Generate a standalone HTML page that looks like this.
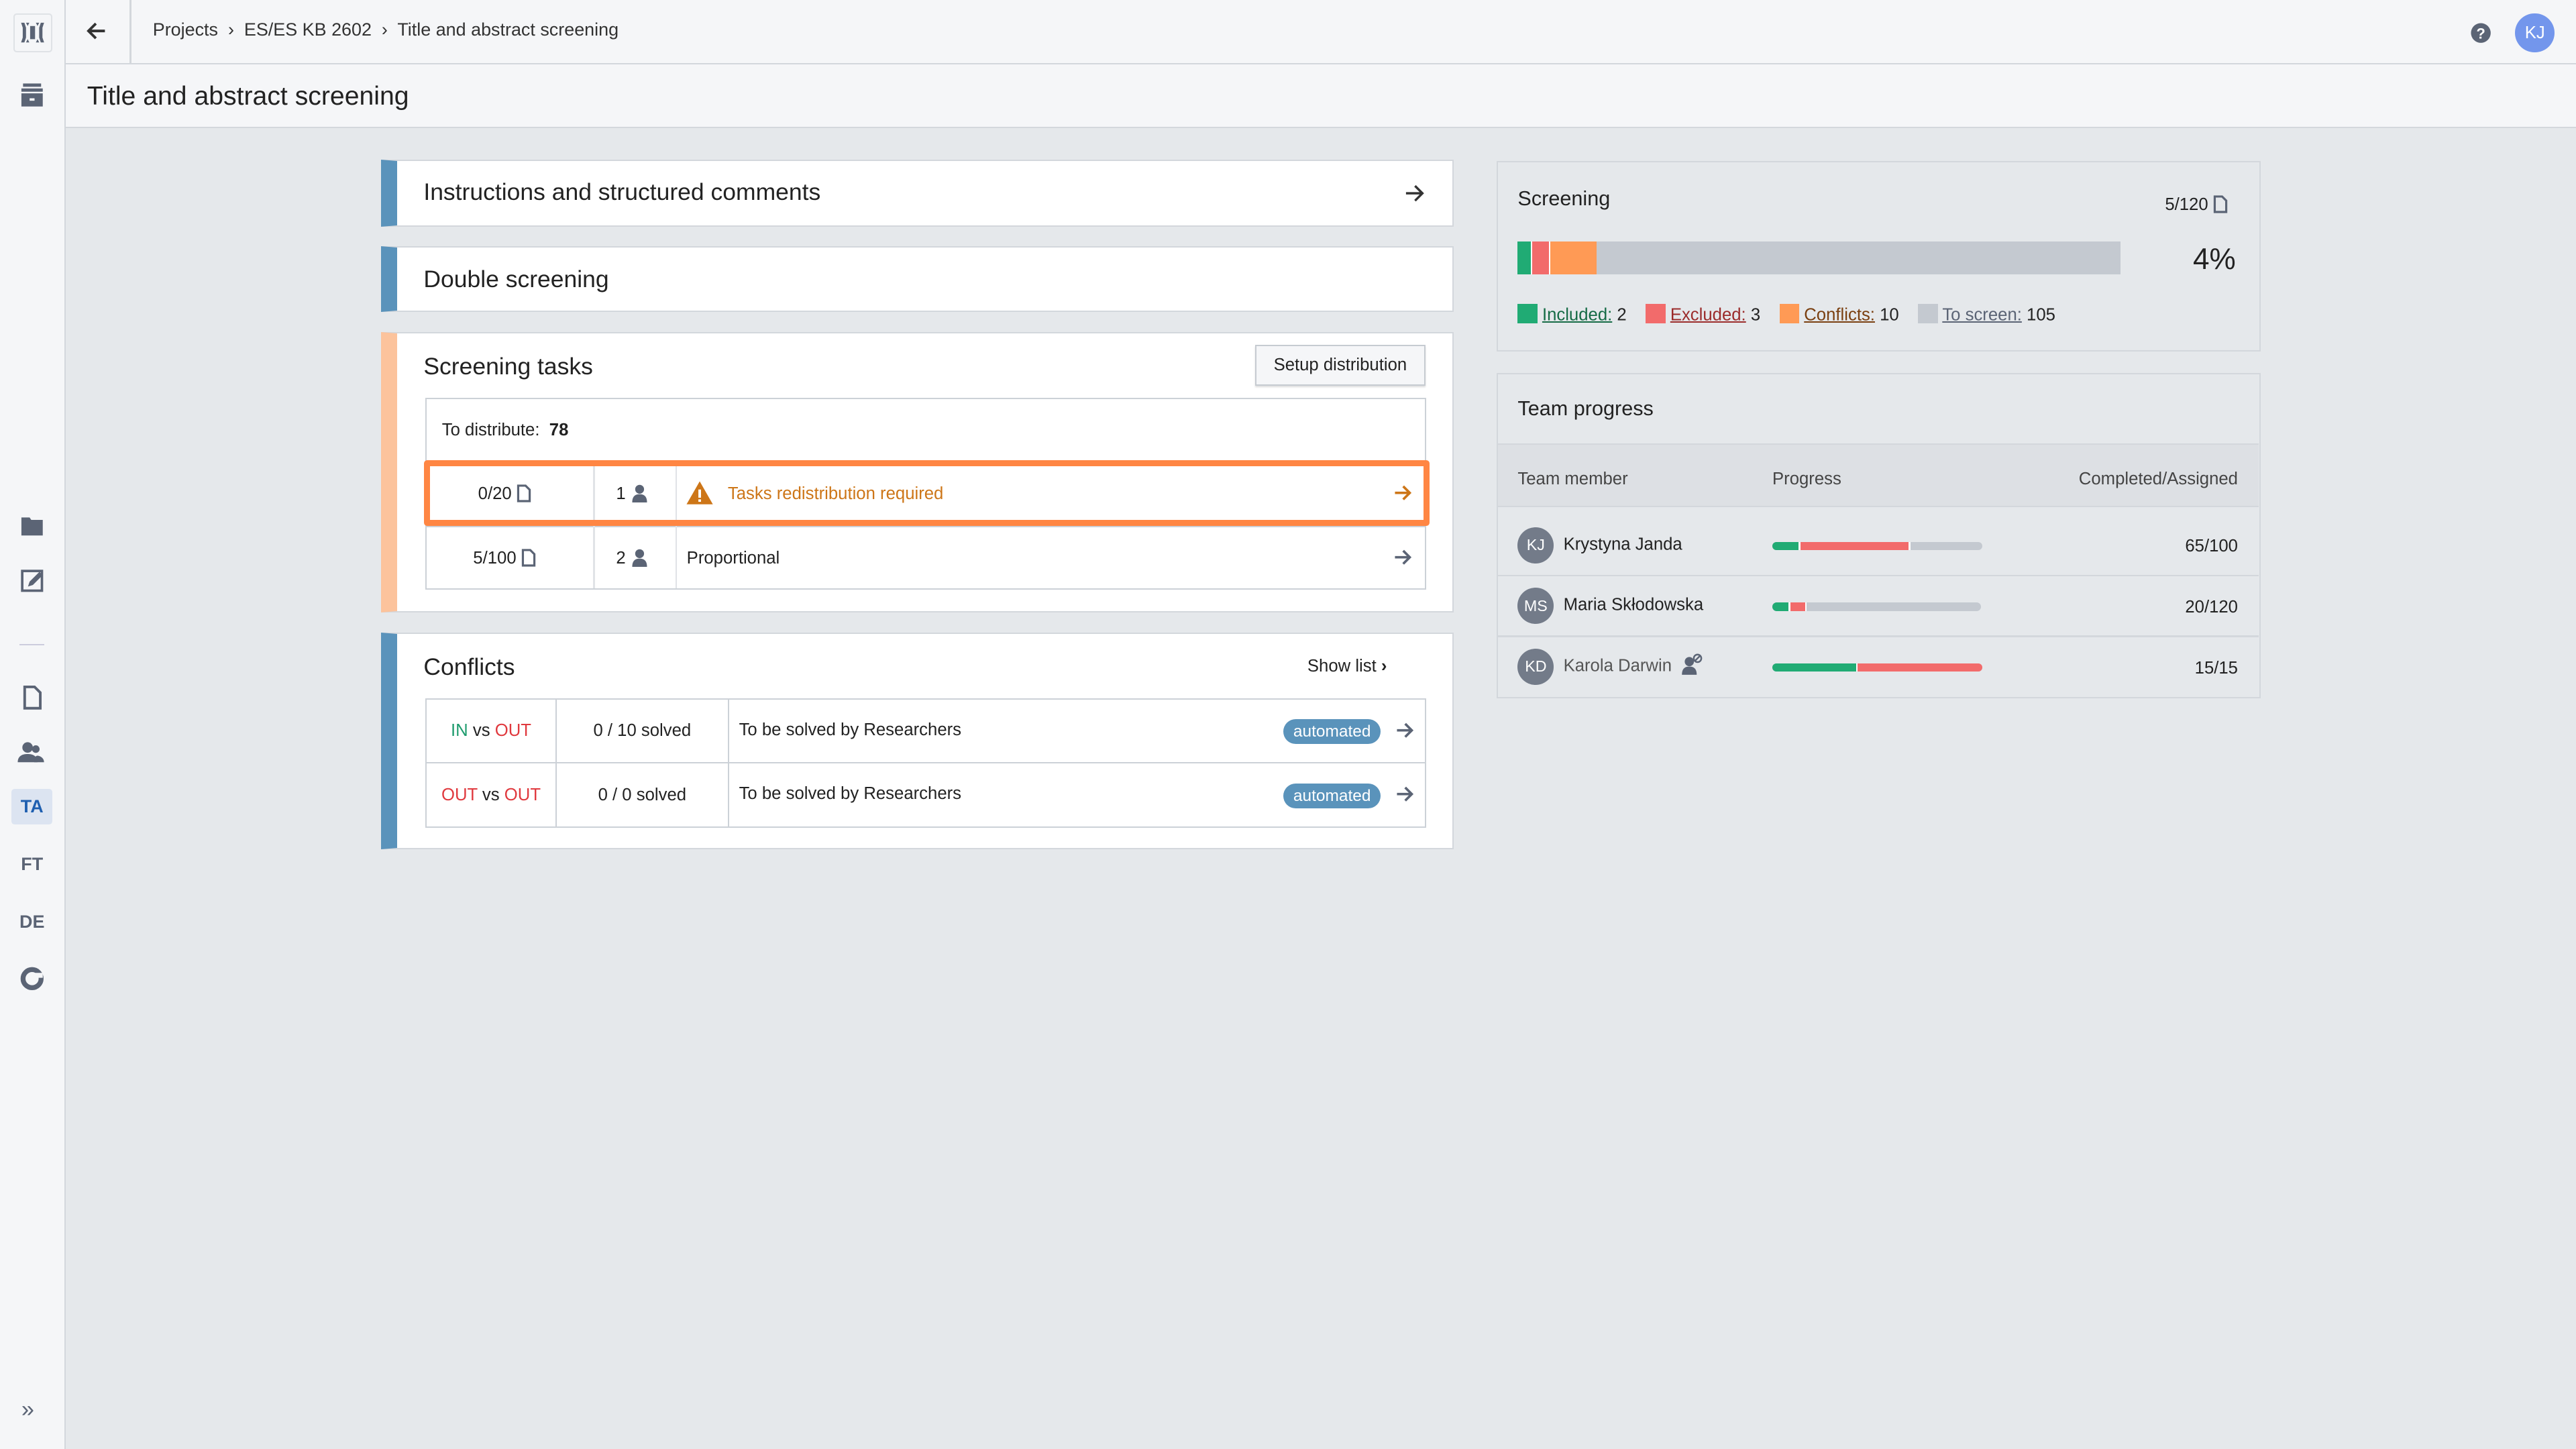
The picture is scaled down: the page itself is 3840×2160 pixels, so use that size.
<!DOCTYPE html>
<html><head><meta charset="utf-8"><style>
*{box-sizing:border-box;margin:0;padding:0}
html,body{width:3840px;height:2160px;overflow:hidden;background:#e5e8eb}
#z{zoom:2.449;width:1568px;height:882px;position:relative;font-family:"Liberation Sans",sans-serif;color:#222;font-size:11px}
.abs{position:absolute}
.top{left:0;top:0;width:1568px;height:39px;background:#f5f6f8;border-bottom:1px solid #d3d7dc}
.tb{left:0;top:39px;width:1568px;height:39px;background:#f5f6f8;border-bottom:1px solid #d3d7dc}
.side{left:0;top:0;width:40px;height:882px;background:#f5f6f8;border-right:1px solid #d3d7dc}
.card{position:absolute;background:#fff;border:1px solid #d3d7dc;border-left:10px solid #5a93bb}
.h{font-size:14.5px;color:#222;position:absolute}
table{border-collapse:collapse;position:absolute;font-size:10.5px}
td{border:1px solid #ccd1d7;height:39px;vertical-align:middle}
.ic{fill:#5b6475}
.badge{background:#5a93bb;color:#fff;border-radius:8px;padding:2px 6px;font-size:10px}
.rc{position:absolute;background:#e5e8eb;border:1px solid #d3d7dc}
.av{width:22px;height:22px;border-radius:50%;background:#737b89;color:#fff;font-size:9.5px;display:inline-flex;align-items:center;justify-content:center;vertical-align:middle}
.bar{position:absolute;height:5px;border-radius:3px;overflow:hidden;background:#c4c9d0;display:flex}
svg.i{vertical-align:-2px}
</style></head><body><div id="z">
<div class="abs top"></div>
<div class="abs tb"></div>
<div class="abs side"></div>
<div class="abs" style="left:8px;top:8px;width:24px;height:24px;border:1px solid #dfe2e6;border-radius:2px;background:#f5f6f8"></div>
<svg class="abs" style="left:12px;top:12px" width="16" height="16"><path d="M1 2h2l1 3v6l-1 3H1l1-3V5z" fill="#5b6475"/><path d="M15 2h-2l-1 3v6l1 3h2l-1-3V5z" fill="#5b6475"/><rect x="6.5" y="4" width="3" height="8" fill="#5b6475"/><path d="M4 2h2l-1 2zM12 2h-2l1 2zM4 14h2l-1-2zM12 14h-2l1-2z" fill="#5b6475"/></svg>
<div class="abs" style="left:79px;top:0;width:1px;height:39px;background:#d3d7dc"></div>
<svg class="abs" style="left:52px;top:12px" width="14" height="14" viewBox="0 0 14 14"><path d="M12 7H2M6.5 2.5L2 7l4.5 4.5" stroke="#333" stroke-width="1.6" fill="none"/></svg>
<div class="abs" style="left:93px;top:12px;font-size:11px;color:#333;white-space:nowrap">Projects &nbsp;›&nbsp; ES/ES KB 2602 &nbsp;›&nbsp; Title and abstract screening</div>
<div class="abs" style="left:53px;top:50px;font-size:16px;color:#222">Title and abstract screening</div>
<svg class="abs" style="left:1503px;top:13px" width="14" height="14"><circle cx="7" cy="7" r="6" fill="#5b6475"/><text x="7" y="10.5" font-size="9" font-weight="bold" fill="#fff" text-anchor="middle" font-family="Liberation Sans">?</text></svg>
<div class="abs" style="left:1531px;top:8px;width:24px;height:24px;border-radius:50%;background:#7396ec;color:#fff;font-size:10.5px;text-align:center;line-height:24px">KJ</div>
<!-- sidebar icons -->
<svg class="abs" style="left:11px;top:50px" width="17" height="17"><rect x="3" y="1" width="11" height="2" class="ic"/><rect x="2" y="4" width="13" height="2" class="ic"/><rect x="2" y="7" width="13" height="8" class="ic"/><rect x="7" y="10" width="3" height="1.5" fill="#f5f6f8"/></svg>
<svg class="abs" style="left:11px;top:312px" width="17" height="17"><path d="M2 3h5l1 1.5h7V14H2z" class="ic"/></svg>
<svg class="abs" style="left:11px;top:345px" width="17" height="17"><rect x="2.5" y="2.5" width="12" height="12" fill="none" stroke="#5b6475" stroke-width="1.5"/><path d="M6 12l1-3 6-6 2 2-6 6z" class="ic"/></svg>
<div class="abs" style="left:12px;top:392px;width:15px;height:1px;background:#ccd"></div>
<svg class="abs" style="left:11px;top:416px" width="17" height="17"><path d="M4 2h6l3.5 3.5V15H4z" fill="none" stroke="#5b6475" stroke-width="1.6"/></svg>
<svg class="abs" style="left:10px;top:450px" width="18" height="17"><circle cx="7" cy="5" r="3.2" class="ic"/><path d="M1 14c0-4 3-5 6-5s6 1 6 5z" class="ic"/><circle cx="12" cy="6" r="2.3" class="ic"/><path d="M11 14c0-3 1-4 2-4s4 1 4 4z" class="ic"/></svg>
<div class="abs" style="left:7px;top:480px;width:25px;height:22px;background:#dce4f1;border-radius:2px;color:#1f5fb0;font-weight:bold;font-size:11px;text-align:center;line-height:22px">TA</div>
<div class="abs" style="left:7px;top:520px;width:25px;text-align:center;color:#5b6475;font-weight:bold;font-size:11px">FT</div>
<div class="abs" style="left:7px;top:555px;width:25px;text-align:center;color:#5b6475;font-weight:bold;font-size:11px">DE</div>
<svg class="abs" style="left:11px;top:587px" width="17" height="17"><circle cx="8.5" cy="8.5" r="5.5" fill="none" stroke="#5b6475" stroke-width="3"/><rect x="9" y="5" width="6" height="3" fill="#f5f6f8"/></svg>
<div class="abs" style="left:13px;top:850px;font-size:14px;color:#5b6475">»</div>

<!-- Left column -->
<div class="card" style="left:232px;top:97px;width:653px;height:41px"><div class="h" style="left:16px;top:11px">Instructions and structured comments</div>
<svg class="abs" style="left:612px;top:13px" width="14" height="14"><path d="M2 7h10M7.5 2.5L12 7l-4.5 4.5" stroke="#333" stroke-width="1.4" fill="none"/></svg></div>
<div class="card" style="left:232px;top:150px;width:653px;height:40px"><div class="h" style="left:16px;top:11px">Double screening</div></div>
<div class="card" style="left:232px;top:202px;width:653px;height:171px;border-left-color:#fcc39c"><div class="h" style="left:16px;top:12px">Screening tasks</div>
<div class="abs" style="left:522px;top:7px;width:104px;height:25px;background:#f5f6f8;border:1px solid #c6cbd1;font-size:10.5px;text-align:center;line-height:23px;box-shadow:0 1px 1px #ddd">Setup distribution</div></div>
<div class="abs" style="left:259px;top:242px;width:609px;height:117px;border:1px solid #ccd1d7;background:#fff"></div>
<div class="abs" style="left:269px;top:256px;font-size:10.5px">To distribute: &nbsp;<b>78</b></div>
<div class="abs" style="left:259px;top:320px;width:609px;height:1px;background:#ccd1d7"></div>
<div class="abs" style="left:361px;top:281px;width:1px;height:77px;background:#e0e3e7"></div>
<div class="abs" style="left:411px;top:281px;width:1px;height:77px;background:#e0e3e7"></div>
<div class="abs" style="left:258px;top:280px;width:612px;height:40px;border:4px solid #ff8643;border-radius:2px"></div>
<div class="abs" style="left:291px;top:295px;font-size:10.5px">0/20 <svg class="i" width="9" height="11"><path d="M1 .8h4.5L8 3.3v6.9H1z" fill="none" stroke="#5b6475" stroke-width="1.3"/></svg></div>
<div class="abs" style="left:375px;top:295px;font-size:10.5px">1 <svg class="i" width="11" height="11"><circle cx="5.5" cy="3" r="2.7" fill="#5b6475"/><path d="M1 11c0-4 2-5 4.5-5S10 7 10 11z" fill="#5b6475"/></svg></div>
<svg class="abs" style="left:417px;top:292px" width="18" height="16"><path d="M9 1L17 15H1z" fill="#cd7618"/><rect x="8.2" y="6" width="1.6" height="5" fill="#fff"/><rect x="8.2" y="12" width="1.6" height="1.5" fill="#fff"/></svg>
<div class="abs" style="left:443px;top:295px;font-size:10.5px;color:#cd7618">Tasks redistribution required</div>
<svg class="abs" style="left:848px;top:294px" width="12" height="12"><path d="M1 6h9M6 2l4 4-4 4" stroke="#cd7618" stroke-width="1.5" fill="none"/></svg>
<div class="abs" style="left:288px;top:334px;font-size:10.5px">5/100 <svg class="i" width="9" height="11"><path d="M1 .8h4.5L8 3.3v6.9H1z" fill="none" stroke="#5b6475" stroke-width="1.3"/></svg></div>
<div class="abs" style="left:375px;top:334px;font-size:10.5px">2 <svg class="i" width="11" height="11"><circle cx="5.5" cy="3" r="2.7" fill="#5b6475"/><path d="M1 11c0-4 2-5 4.5-5S10 7 10 11z" fill="#5b6475"/></svg></div>
<div class="abs" style="left:418px;top:334px;font-size:10.5px">Proportional</div>
<svg class="abs" style="left:848px;top:333px" width="12" height="12"><path d="M1 6h9M6 2l4 4-4 4" stroke="#5b6475" stroke-width="1.5" fill="none"/></svg>

<div class="card" style="left:232px;top:385px;width:653px;height:132px"><div class="h" style="left:16px;top:12px">Conflicts</div>
<div class="abs" style="left:554px;top:14px;font-size:10.5px">Show list <b>›</b></div></div>
<table style="left:259px;top:425px;width:609px;background:#fff">
<tr><td style="width:79px;text-align:center"><span style="color:#1f9c6e">IN</span> vs <span style="color:#e0393e">OUT</span></td><td style="width:105px;text-align:center">0 / 10 solved</td><td style="padding-left:6px">To be solved by Researchers<span style="float:right;margin-right:6px"><span class="badge">automated</span>&nbsp;&nbsp;&nbsp;<svg class="i" width="12" height="12"><path d="M1 6h9M6 2l4 4-4 4" stroke="#5b6475" stroke-width="1.5" fill="none"/></svg></span></td></tr>
<tr><td style="text-align:center"><span style="color:#e0393e">OUT</span> vs <span style="color:#e0393e">OUT</span></td><td style="text-align:center">0 / 0 solved</td><td style="padding-left:6px">To be solved by Researchers<span style="float:right;margin-right:6px"><span class="badge">automated</span>&nbsp;&nbsp;&nbsp;<svg class="i" width="12" height="12"><path d="M1 6h9M6 2l4 4-4 4" stroke="#5b6475" stroke-width="1.5" fill="none"/></svg></span></td></tr>
</table>

<!-- Right column -->
<div class="rc" style="left:911px;top:98px;width:465px;height:116px">
<div class="abs" style="left:12px;top:15px;font-size:12.5px">Screening</div>
<div class="abs" style="left:406px;top:20px;font-size:10.5px">5/120 <svg class="i" width="9" height="11"><path d="M1 .8h4.5L8 3.3v6.9H1z" fill="none" stroke="#5b6475" stroke-width="1.3"/></svg></div>
<div class="abs" style="left:12px;top:48px;width:367px;height:20px;background:#c4c9d0;display:flex"><div style="width:8px;background:#20ab74"></div><div style="width:1px;background:#fff"></div><div style="width:10px;background:#f26b6b"></div><div style="width:1px;background:#fff"></div><div style="width:28px;background:#ff9a55"></div></div>
<div class="abs" style="left:423px;top:49px;font-size:18px">4%</div>
<div class="abs" style="left:12px;top:86px;font-size:10.5px;white-space:nowrap">
<span style="display:inline-block;width:12px;height:12px;background:#20ab74;vertical-align:-2px"></span> <u style="color:#156b45">Included:</u> 2 &nbsp;&nbsp;
<span style="display:inline-block;width:12px;height:12px;background:#f26b6b;vertical-align:-2px"></span> <u style="color:#9b2b2b">Excluded:</u> 3 &nbsp;&nbsp;
<span style="display:inline-block;width:12px;height:12px;background:#ff9a55;vertical-align:-2px"></span> <u style="color:#7a3f10">Conflicts:</u> 10 &nbsp;&nbsp;
<span style="display:inline-block;width:12px;height:12px;background:#c4c9d0;vertical-align:-2px"></span> <u style="color:#5b6475">To screen:</u> 105</div>
</div>
<div class="rc" style="left:911px;top:227px;width:465px;height:198px">
<div class="abs" style="left:12px;top:14px;font-size:12.5px">Team progress</div>
<div class="abs" style="left:0;top:42px;width:463px;height:39px;background:#dde0e4;border-top:1px solid #d3d7dc;border-bottom:1px solid #d3d7dc"></div>
<div class="abs" style="left:12px;top:58px;font-size:10.5px;color:#444">Team member</div>
<div class="abs" style="left:167px;top:58px;font-size:10.5px;color:#444">Progress</div>
<div class="abs" style="right:13px;top:58px;font-size:10.5px;color:#444">Completed/Assigned</div>
<div class="abs" style="left:0;top:122px;width:463px;height:1px;background:#d3d7dc"></div>
<div class="abs" style="left:0;top:159px;width:463px;height:1px;background:#d3d7dc"></div>
<div class="abs" style="left:12px;top:93px;font-size:10.5px"><span class="av">KJ</span>&nbsp; Krystyna Janda</div>
<div class="abs" style="left:12px;top:130px;font-size:10.5px"><span class="av">MS</span>&nbsp; Maria Skłodowska</div>
<div class="abs" style="left:12px;top:167px;font-size:10.5px;color:#555"><span class="av">KD</span>&nbsp; Karola Darwin &nbsp;<svg class="i" width="13" height="13"><circle cx="5" cy="5" r="2.8" fill="#5b6475"/><path d="M0.5 13c0-4 2-5 4.5-5s4.5 1 4.5 5z" fill="#5b6475"/><circle cx="10" cy="3" r="2.3" fill="none" stroke="#5b6475" stroke-width="1"/><path d="M8.5 4.5l3-3" stroke="#5b6475"/></svg></div>
<div class="bar" style="left:167px;top:102px;width:128px"><div style="width:16px;background:#20ab74"></div><div style="width:1px;background:#fff"></div><div style="width:66px;background:#f26b6b"></div><div style="width:1px;background:#fff"></div></div>
<div class="bar" style="left:167px;top:139px;width:127px"><div style="width:10px;background:#20ab74"></div><div style="width:1px;background:#fff"></div><div style="width:9px;background:#f26b6b"></div><div style="width:1px;background:#fff"></div></div>
<div class="bar" style="left:167px;top:176px;width:128px"><div style="width:51px;background:#20ab74"></div><div style="width:1px;background:#fff"></div><div style="width:76px;background:#f26b6b"></div></div>
<div class="abs" style="right:13px;top:99px;font-size:10.5px">65/100</div>
<div class="abs" style="right:13px;top:136px;font-size:10.5px">20/120</div>
<div class="abs" style="right:13px;top:173px;font-size:10.5px">15/15</div>
</div>
</div></body></html>
